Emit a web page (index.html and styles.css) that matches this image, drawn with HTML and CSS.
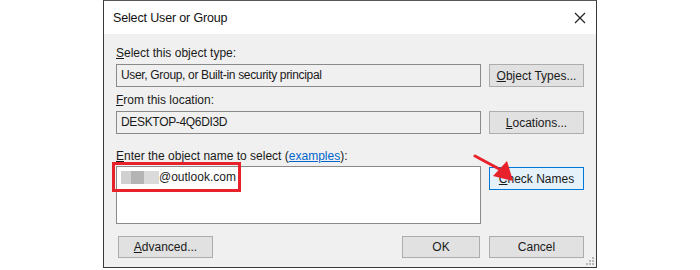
FILE: index.html
```html
<!DOCTYPE html>
<html>
  <head>
    <meta charset="UTF-8">
    <title>Select User or Group</title>
    <link rel="stylesheet" href="styles.css">
  </head>
  <body>
    <div class="dialog">
      <div class="titlebar">
        <span class="title">Select User or Group</span>
        <svg class="close" width="12" height="12" viewBox="0 0 12 12">
          <path d="M1 1 L11 11 M11 1 L1 11" stroke="#222" stroke-width="1.2" fill="none"/>
        </svg>
      </div>

      <div class="content">
        <div class="label"><u>S</u>elect this object type:</div>
        <div class="row">
          <div class="field">User, Group, or Built-in security principal</div>
          <button class="btn" type="button"><u>O</u>bject Types...</button>
        </div>

        <div class="label"><u>F</u>rom this location:</div>
        <div class="row">
          <div class="field">DESKTOP-4Q6DI3D</div>
          <button class="btn" type="button"><u>L</u>ocations...</button>
        </div>

        <div class="label label-names"><u>E</u>nter the object name to select (<a href="#">examples</a>):</div>
        <div class="row row-top">
          <div class="names">
            <span class="blur">
              <i class="b1"></i><i class="b2"></i><i class="b3"></i>
            </span>@outlook.com
            <div class="highlight"></div>
          </div>
          <button class="btn btn-focus" type="button"><u>C</u>heck Names</button>
        </div>

        <div class="footer">
          <button class="btn" type="button"><u>A</u>dvanced...</button>
          <div class="footer-right">
            <button class="btn btn-ok" type="button">OK</button>
            <button class="btn" type="button">Cancel</button>
          </div>
        </div>
      </div>

      <svg class="arrow" width="50" height="30" viewBox="0 0 50 30">
        <path d="M2 2 L28 16" stroke="#e8222a" stroke-width="3" stroke-linecap="round"/>
        <polygon points="20,22 34,7 40,27" fill="#e8222a"/>
      </svg>

      <svg class="grip" width="10" height="10" viewBox="0 0 10 10">
        <rect x="7" y="1" width="2" height="2" fill="#b8b8b8"/>
        <rect x="4" y="4" width="2" height="2" fill="#b8b8b8"/>
        <rect x="7" y="4" width="2" height="2" fill="#b8b8b8"/>
        <rect x="1" y="7" width="2" height="2" fill="#b8b8b8"/>
        <rect x="4" y="7" width="2" height="2" fill="#b8b8b8"/>
        <rect x="7" y="7" width="2" height="2" fill="#b8b8b8"/>
      </svg>
    </div>
  </body>
</html>
```

FILE: styles.css
```css
* {
  margin: 0;
  padding: 0;
  box-sizing: border-box;
}

body {
  width: 700px;
  height: 270px;
  background: #fff;
  font-family: 'Liberation Sans', Arial, sans-serif;
  font-size: 12px;
  color: #1a1a1a;
}

.dialog {
  position: relative;
  margin-left: 103px;
  width: 494px;
  height: 268px;
  border: 1px solid #3a3a3a;
  border-top-color: #555;
  background: #f0f0f0;
  display: flex;
  flex-direction: column;
}

.titlebar {
  height: 33px;
  background: #fff;
  display: flex;
  align-items: center;
  justify-content: space-between;
  padding: 0 10px 0 9px;
}

.title {
  font-size: 12.5px;
  letter-spacing: -0.15px;
  color: #111;
}

.close {
  display: block;
}

.content {
  flex: 1;
  padding: 12px 12px 0 12px;
}

.label {
  height: 15px;
  line-height: 15px;
  margin-bottom: 3px;
}

.label-names {
  margin-top: 15px;
  margin-bottom: 2px;
}

.label a {
  color: #0066cc;
}

.row {
  display: flex;
  justify-content: space-between;
  align-items: center;
  margin-bottom: 6px;
}

.row-top {
  align-items: flex-start;
}

.field {
  width: 365px;
  height: 23px;
  line-height: 21px;
  padding: 0 4px;
  border: 1px solid #8a8a8a;
  background: #f0f0f0;
  letter-spacing: -0.33px;
}

.btn {
  width: 95px;
  height: 23px;
  border: 1px solid #adadad;
  background: #e1e1e1;
  font-family: 'Liberation Sans', Arial, sans-serif;
  font-size: 12px;
  color: #1a1a1a;
}

.btn-focus {
  margin-top: 1px;
  border-color: #0078d7;
  background: #e5f1fb;
}

.names {
  position: relative;
  width: 365px;
  height: 58px;
  padding: 3px 4px;
  border: 1px solid #8a8a8a;
  background: #fff;
  line-height: 15px;
}

.blur {
  display: inline-flex;
  vertical-align: -3px;
  height: 13px;
}

.blur i {
  display: block;
  height: 13px;
}

.b1 { width: 10px; background: #d0d0d0; }
.b2 { width: 13px; background: #b4b4b4; }
.b3 { width: 15px; background: #dadada; }

.highlight {
  position: absolute;
  left: -5px;
  top: -5px;
  width: 129px;
  height: 30px;
  border: 3px solid #e8222a;
}

.footer {
  display: flex;
  justify-content: space-between;
  margin-top: 12px;
  padding-left: 2px;
}

.footer .btn {
  height: 22px;
}

.footer-right {
  display: flex;
  gap: 9px;
}

.btn-ok {
  width: 78px;
}

.arrow {
  position: absolute;
  left: 369px;
  top: 153px;
}

.grip {
  position: absolute;
  right: 1px;
  bottom: 1px;
}
```
